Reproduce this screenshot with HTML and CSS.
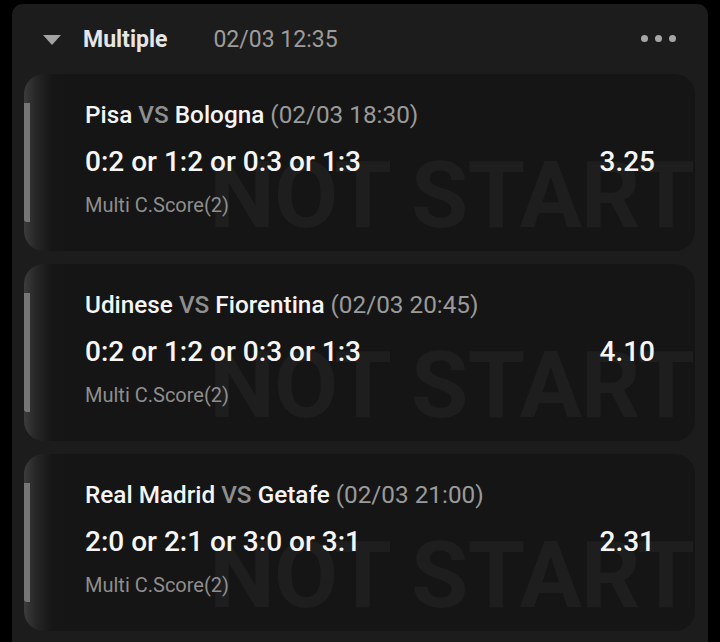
FILE: index.html
```html
<!DOCTYPE html>
<html>
<head>
<meta charset="utf-8">
<link rel="stylesheet" href="styles.css">
</head>
<body>
<div class="panel">
  <div class="header">
    <svg class="caret" width="18" height="10" viewBox="0 0 18 10"><polygon points="0,0 18,0 9,10" fill="#a3a3a3"/></svg>
    <span class="title">Multiple</span>
    <span class="htime">02/03 12:35</span>
    <span class="dots"><i></i><i></i><i></i></span>
  </div>
  <div class="list">
    <div class="card">
      <div class="mark" aria-hidden="true">NOT START</div>
      <div class="bar"></div>
      <div class="teams"><b>Pisa</b> <span class="vs">VS</span> <b>Bologna</b> <span class="ktime">(02/03 18:30)</span></div>
      <div class="pick"><span>0:2 or 1:2 or 0:3 or 1:3</span><span class="odds">3.25</span></div>
      <div class="market">Multi C.Score(2)</div>
    </div>
    <div class="card">
      <div class="mark" aria-hidden="true">NOT START</div>
      <div class="bar"></div>
      <div class="teams"><b>Udinese</b> <span class="vs">VS</span> <b>Fiorentina</b> <span class="ktime">(02/03 20:45)</span></div>
      <div class="pick"><span>0:2 or 1:2 or 0:3 or 1:3</span><span class="odds">4.10</span></div>
      <div class="market">Multi C.Score(2)</div>
    </div>
    <div class="card">
      <div class="mark" aria-hidden="true">NOT START</div>
      <div class="bar"></div>
      <div class="teams"><b>Real Madrid</b> <span class="vs">VS</span> <b>Getafe</b> <span class="ktime">(02/03 21:00)</span></div>
      <div class="pick"><span>2:0 or 2:1 or 3:0 or 3:1</span><span class="odds">2.31</span></div>
      <div class="market">Multi C.Score(2)</div>
    </div>
  </div>
</div>
</body>
</html>
```

FILE: styles.css
```css
html, body {
  margin: 0;
  padding: 0;
  background: #000;
  height: 642px;
  overflow: hidden;
}
body {
  font-family: Roboto, "Liberation Sans", sans-serif;
  color: #f2f2f2;
}
.panel {
  margin: 4px 12px 0 12px;
  width: 695.5px;
  background: #1c1c1c;
  border-radius: 11px 11px 0 0;
  padding: 0 12.5px 0 12px;
  box-sizing: border-box;
  height: 638px;
  overflow: hidden;
}
.header {
  height: 70px;
  box-sizing: border-box;
  padding: 2px 32px 0 31px;
  display: flex;
  align-items: center;
  margin: 0 -12.5px 0 -12px;
}
.caret {
  display: block;
  flex: none;
}
.title {
  margin-left: 22px;
  font-size: 23px;
  font-weight: 700;
  line-height: 30px;
  color: #e6e6e6;
}
.htime {
  margin-left: 46px;
  font-size: 23px;
  line-height: 30px;
  color: #9c9c9c;
}
.dots {
  margin-left: auto;
  display: flex;
  gap: 7px;
  padding-bottom: 3px;
}
.dots i {
  display: block;
  width: 7px;
  height: 7px;
  border-radius: 50%;
  background: #a6a6a6;
}
.list {
  display: flex;
  flex-direction: column;
  gap: 13px;
}
.card {
  position: relative;
  overflow: hidden;
  height: 177px;
  flex: none;
  box-sizing: border-box;
  border-radius: 20px;
  background: linear-gradient(to right, #3c3c3c 0px, #262626 12px, #161616 28px, #151515 40px);
  padding: 25px 40px 0 61px;
}
.mark {
  position: absolute;
  right: 1px;
  top: 72px;
  font-size: 93px;
  line-height: 100px;
  font-weight: 700;
  color: #1e1e1e;
  white-space: nowrap;
  letter-spacing: -0.8px;
}
.bar {
  position: absolute;
  left: 0;
  top: 29px;
  width: 6px;
  height: 119px;
  background: #767676;
  border-radius: 0 0 0 3px;
}
.teams, .pick, .market {
  position: relative;
}
.teams {
  font-size: 24.3px;
  line-height: 31px;
  white-space: nowrap;
}
.teams b {
  font-weight: 500;
  color: #f4f4f4;
}
.teams .vs {
  font-weight: 500;
  color: #8f8f8f;
}
.teams .ktime {
  color: #9a9a9a;
}
.pick {
  margin-top: 15px;
  font-size: 28px;
  font-weight: 500;
  line-height: 34px;
  display: flex;
  justify-content: space-between;
  color: #f6f6f6;
}
.market {
  margin-top: 13px;
  font-size: 20px;
  line-height: 26px;
  color: #8e8e8e;
}
```
